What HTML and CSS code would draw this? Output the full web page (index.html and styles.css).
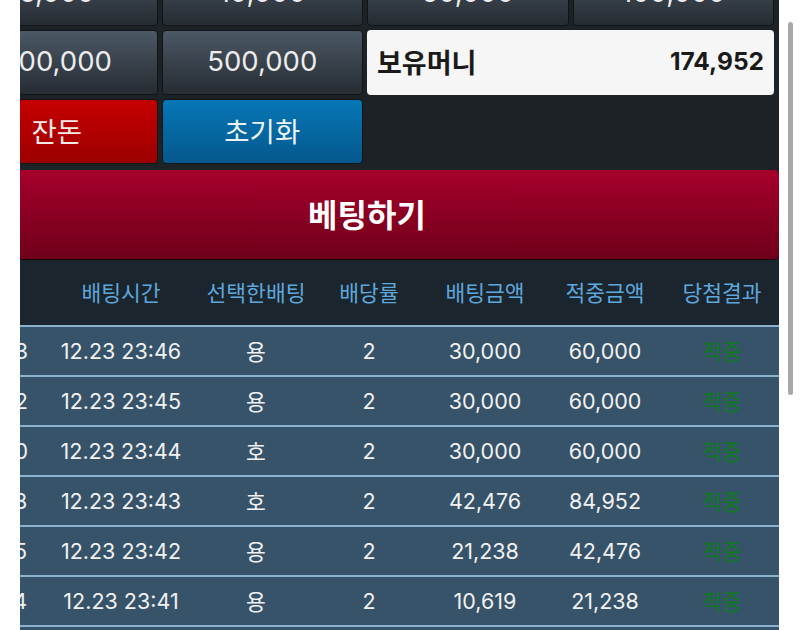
FILE: index.html
```html
<!DOCTYPE html>
<html lang="ko">
<head>
<meta charset="utf-8">
<title>베팅</title>
<link rel="stylesheet" href="styles.css">
</head>
<body>
<div class="viewport">
  <div class="page">
    <div class="chips">
      <button class="chip">5,000</button>
      <button class="chip">10,000</button>
      <button class="chip">50,000</button>
      <button class="chip">100,000</button>
      <button class="chip">300,000</button>
      <button class="chip">500,000</button>
      <div class="balance"><span class="balance-label">보유머니</span><span class="balance-value">174,952</span></div>
      <button class="chip chip-red">잔돈</button>
      <button class="chip chip-blue">초기화</button>
    </div>
    <button class="bet">베팅하기</button>
    <table class="history">
      <colgroup>
        <col class="c-round"><col class="c-time"><col class="c-pick"><col class="c-odds"><col class="c-amt"><col class="c-amt"><col class="c-res">
      </colgroup>
      <thead>
        <tr><th>회차</th><th>배팅시간</th><th>선택한배팅</th><th>배당률</th><th>배팅금액</th><th>적중금액</th><th>당첨결과</th></tr>
      </thead>
      <tbody>
        <tr><td>41583</td><td>12.23 23:46</td><td>용</td><td>2</td><td>30,000</td><td>60,000</td><td class="win">적중</td></tr>
        <tr><td>41582</td><td>12.23 23:45</td><td>용</td><td>2</td><td>30,000</td><td>60,000</td><td class="win">적중</td></tr>
        <tr><td>41580</td><td>12.23 23:44</td><td>호</td><td>2</td><td>30,000</td><td>60,000</td><td class="win">적중</td></tr>
        <tr><td>41578</td><td>12.23 23:43</td><td>호</td><td>2</td><td>42,476</td><td>84,952</td><td class="win">적중</td></tr>
        <tr><td>41575</td><td>12.23 23:42</td><td>용</td><td>2</td><td>21,238</td><td>42,476</td><td class="win">적중</td></tr>
        <tr><td>41574</td><td>12.23 23:41</td><td>용</td><td>2</td><td>10,619</td><td>21,238</td><td class="win">적중</td></tr>
        <tr><td>41573</td><td>12.23 23:40</td><td>호</td><td>2</td><td>10,619</td><td>21,238</td><td class="win">적중</td></tr>
      </tbody>
    </table>
  </div>
</div>
<div class="scrollbar"></div>
</body>
</html>
```
FILE: styles.css
```css
html, body {
  margin: 0;
  padding: 0;
  background: #ffffff;
}
body {
  font-family: "Inter", "Noto Sans CJK KR", sans-serif;
  height: 630px;
  overflow: hidden;
}
.viewport {
  margin-left: 20px;
  width: 759px;
  height: 630px;
  overflow: hidden;
  background: #1d2227;
}
.page {
  width: 828px;
  margin-left: -69px;
  margin-top: -39px;
}
.chips {
  display: grid;
  grid-template-columns: repeat(4, 1fr);
  grid-auto-rows: 65px;
  gap: 4px;
  padding: 0 5px;
}
.chip {
  font-family: inherit;
  font-size: 27.5px;
  color: #ececec;
  border: 1px solid #121518;
  border-radius: 4px;
  background: linear-gradient(#4b5865, #262c32);
  padding: 0 0 4px;
  margin: 0;
}
.chip-red {
  background: linear-gradient(#c60000, #9c0000);
  color: #f6e9e9;
}
.chip-blue {
  background: linear-gradient(#0677b6, #05588d);
  color: #eaf2f8;
}
.balance {
  grid-column: span 2;
  background: #f6f6f6;
  border-radius: 4px;
  display: flex;
  align-items: center;
  justify-content: space-between;
  padding: 0 10px 3px;
  color: #1a1a1a;
  font-weight: 700;
  font-size: 27px;
}
.balance-value {
  font-size: 24.5px;
}
.bet {
  display: block;
  width: 100%;
  height: 90px;
  margin: 6px 0 0;
  padding: 0 0 3px 4px;
  border: 0;
  border-bottom: 1px solid #1a0306;
  border-radius: 0 5px 5px 0;
  background: linear-gradient(#a6002b, #6f0019);
  color: #ffffff;
  font-family: inherit;
  font-size: 32px;
  font-weight: 700;
}
.history {
  width: 828px;
  table-layout: fixed;
  border-collapse: collapse;
}
.c-round { width: 92px; }
.c-time { width: 156px; }
.c-pick { width: 114px; }
.c-odds { width: 112px; }
.c-amt { width: 120px; }
.c-res { width: 114px; }
.history th {
  height: 63px;
  padding: 0 0 2px;
  background: #1b252d;
  color: #5ea7dd;
  font-size: 21.5px;
  font-weight: 400;
  text-align: center;
}
.history td {
  height: 47px;
  padding: 0 0 1px;
  border-top: 2px solid #8bb2cf;
  background: #37536a;
  color: #f1f1f1;
  font-size: 21.5px;
  text-align: center;
}
.history td.win {
  color: #0d7c1e;
}
.scrollbar {
  position: absolute;
  left: 788px;
  top: 22px;
  width: 5px;
  height: 373px;
  border-radius: 3px;
  background: #a9a9a9;
}
```
